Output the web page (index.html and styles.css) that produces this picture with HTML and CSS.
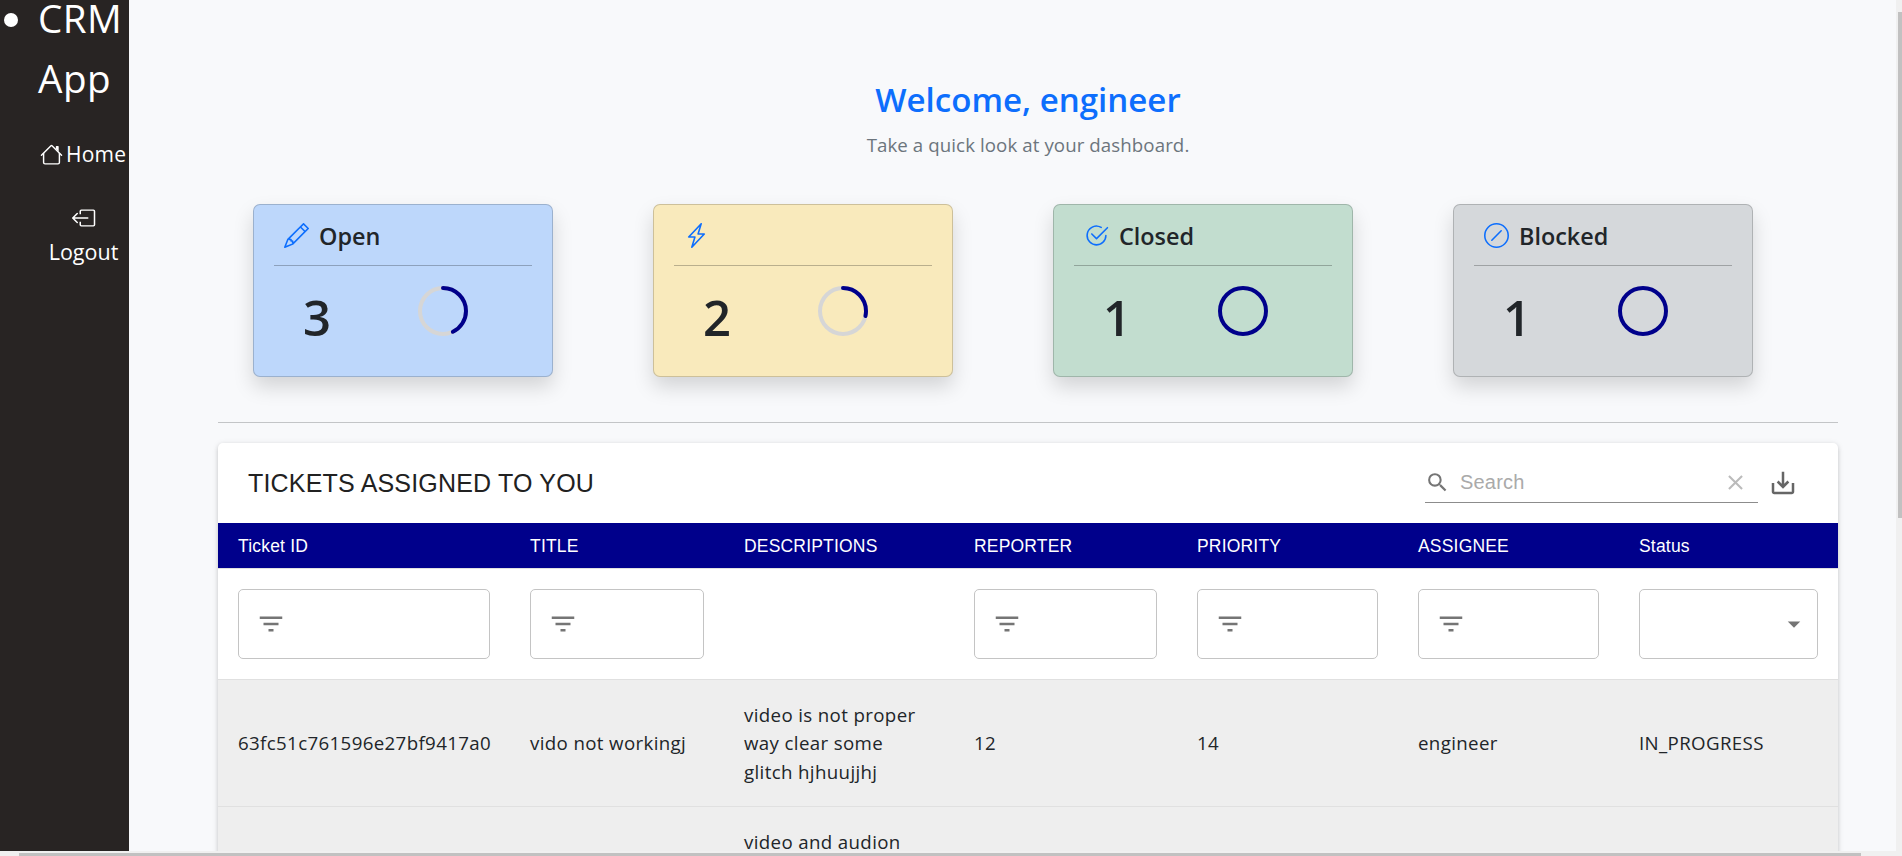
FILE: index.html
```html
<!DOCTYPE html>
<html lang="en">
<head>
<meta charset="utf-8">
<title>CRM App</title>
<link rel="stylesheet" href="styles.css">
</head>
<body>
<div class="window">
  <aside class="sidebar">
    <ul class="nav">
      <li class="brand">CRM App</li>
    </ul>
    <a class="nav-home"><svg class="icon" viewBox="0 0 16 16"><path fill-rule="evenodd" d="M2 13.5V7h1v6.5a.5.5 0 0 0 .5.5h9a.5.5 0 0 0 .5-.5V7h1v6.5a1.5 1.5 0 0 1-1.5 1.5h-9A1.5 1.5 0 0 1 2 13.5zm11-11V6l-2-2V2.500a.5.5 0 0 1 .5-.5h1a.5.5 0 0 1 .5.5z"/><path fill-rule="evenodd" d="M7.293 1.500a1 1 0 0 1 1.414 0l6.647 6.646a.5.5 0 0 1-.708.708L8 2.207 1.354 8.854a.5.5 0 1 1-.708-.708L7.293 1.500z"/></svg><span>Home</span></a>
    <a class="nav-logout"><svg class="icon logout-icon" viewBox="0 0 16 16"><path fill-rule="evenodd" d="M5 4.500V3.500A1.200 1.200 0 0 1 6.200 2.300h8.100A1.200 1.200 0 0 1 15.500 3.500v9a1.200 1.200 0 0 1-1.200 1.200H6.200A1.200 1.200 0 0 1 5 12.500v-2h1v2a.3.3 0 0 0 .3.3h7.900a.3.3 0 0 0 .3-.3v-9a.3.3 0 0 0-.3-.3H6.300a.3.3 0 0 0-.3.3v2h-1z"/><path fill-rule="evenodd" d="M.146 8.354a.5.5 0 0 1 0-.708l3-3a.5.5 0 1 1 .708.708L1.707 7.500H10.500a.5.5 0 0 1 0 1H1.707l2.147 2.146a.5.5 0 0 1-.708.708l-3-3z"/></svg><span>Logout</span></a>
  </aside>

  <main class="content">
    <h3 class="welcome">Welcome, engineer</h3>
    <p class="lead">Take a quick look at your dashboard.</p>

    <section class="cards">
      <article class="card open">
        <h5 class="card-title"><svg class="icon" viewBox="0 0 16 16"><path d="M12.146.146a.5.5 0 0 1 .708 0l3 3a.5.5 0 0 1 0 .708l-10 10a.5.5 0 0 1-.168.11l-5 2a.5.5 0 0 1-.65-.65l2-5a.5.5 0 0 1 .11-.168l10-10zM11.207 2.500 13.500 4.793 14.793 3.500 12.500 1.207 11.207 2.500zm1.586 3L10.500 3.207 4 9.707V10h.5a.5.5 0 0 1 .5.5v.5h.5a.5.5 0 0 1 .5.5v.5h.293l6.500-6.500zm-9.761 5.175-.106.106-1.528 3.821 3.821-1.528.106-.106A.5.5 0 0 1 5 12.500V12h-.5a.5.5 0 0 1-.5-.5V11h-.5a.5.5 0 0 1-.468-.325z"/></svg><span>Open</span></h5>
        <div class="card-body"><span class="count">3</span><svg class="ring" viewBox="0 0 50 50"><circle class="trail" cx="25" cy="25" r="23"/><circle class="bar" cx="25" cy="25" r="23" pathLength="100" stroke-dasharray="42.9 100"/></svg></div>
      </article>
      <article class="card progress">
        <h5 class="card-title"><svg class="icon" viewBox="0 0 16 16"><path d="M11.251.068a.5.5 0 0 1 .227.580L9.677 6.500H13a.5.5 0 0 1 .364.843l-8 8.500a.5.5 0 0 1-.842-.490L6.323 9.500H3a.5.5 0 0 1-.364-.843l8-8.500a.5.5 0 0 1 .615-.090zM4.157 8.500H7a.5.5 0 0 1 .478.647L6.110 13.590l5.732-6.090H9a.5.5 0 0 1-.478-.647L9.890 2.410 4.157 8.500z"/></svg></h5>
        <div class="card-body"><span class="count">2</span><svg class="ring" viewBox="0 0 50 50"><circle class="trail" cx="25" cy="25" r="23"/><circle class="bar" cx="25" cy="25" r="23" pathLength="100" stroke-dasharray="28.6 100"/></svg></div>
      </article>
      <article class="card closed">
        <h5 class="card-title"><svg class="icon" viewBox="0 0 16 16"><path d="M2.500 8a5.500 5.500 0 0 1 8.250-4.764.5.5 0 0 0 .5-.866A6.500 6.500 0 1 0 14.500 8a.5.5 0 0 0-1 0 5.500 5.500 0 1 1-11 0z"/><path d="M15.354 3.354a.5.5 0 0 0-.708-.708L8 9.293 5.354 6.646a.5.5 0 1 0-.708.708l3 3a.5.5 0 0 0 .708 0l7-7z"/></svg><span>Closed</span></h5>
        <div class="card-body"><span class="count">1</span><svg class="ring" viewBox="0 0 50 50"><circle class="bar" cx="25" cy="25" r="23"/></svg></div>
      </article>
      <article class="card blocked">
        <h5 class="card-title"><svg class="icon" viewBox="0 0 16 16"><path d="M8 15A7 7 0 1 1 8 1a7 7 0 0 1 0 14zm0 1A8 8 0 1 0 8 0a8 8 0 0 0 0 16z"/><path d="M11.354 4.646a.5.5 0 0 0-.708 0l-6 6a.5.5 0 0 0 .708.708l6-6a.5.5 0 0 0 0-.708z"/></svg><span>Blocked</span></h5>
        <div class="card-body"><span class="count">1</span><svg class="ring" viewBox="0 0 50 50"><circle class="bar" cx="25" cy="25" r="23"/></svg></div>
      </article>
    </section>

    <hr class="divider">

    <section class="paper">
      <header class="toolbar">
        <h6 class="table-title">TICKETS ASSIGNED TO YOU</h6>
        <div class="search">
          <svg class="mui-sm" viewBox="0 0 24 24"><path d="M15.500 14h-.79l-.28-.27A6.471 6.471 0 0 0 16 9.500 6.500 6.500 0 1 0 9.500 16c1.610 0 3.090-.59 4.230-1.570l.27.28v.79l5 4.990L20.490 19l-4.990-5zm-6 0C7.010 14 5 11.990 5 9.500S7.010 5 9.500 5 14 7.010 14 9.500 11.990 14 9.500 14z"/></svg>
          <span class="placeholder">Search</span>
          <svg class="mui-sm clear" viewBox="0 0 24 24"><path d="M19 6.410 17.590 5 12 10.590 6.410 5 5 6.410 10.590 12 5 17.590 6.410 19 12 13.410 17.590 19 19 17.590 13.410 12z"/></svg>
        </div>
        <svg class="mui export" viewBox="0 0 24 24"><path d="M19 12v7H5v-7H3v7c0 1.100.9 2 2 2h14c1.100 0 2-.9 2-2v-7h-2zm-6 .67 2.590-2.580L17 11.500l-5 5-5-5 1.410-1.410L11 12.670V3h2z"/></svg>
      </header>
      <table class="tickets">
        <colgroup><col class="c-id"><col class="c-title"><col class="c-desc"><col class="c-reporter"><col class="c-priority"><col class="c-assignee"><col class="c-status"></colgroup>
        <thead>
          <tr><th>Ticket ID</th><th>TITLE</th><th>DESCRIPTIONS</th><th>REPORTER</th><th>PRIORITY</th><th>ASSIGNEE</th><th>Status</th></tr>
        </thead>
        <tbody>
          <tr class="filters">
            <td><div class="field"><svg class="mui" viewBox="0 0 24 24"><path d="M10 18h4v-2h-4v2zM3 6v2h18V6H3zm3 7h12v-2H6v2z"/></svg></div></td>
            <td><div class="field"><svg class="mui" viewBox="0 0 24 24"><path d="M10 18h4v-2h-4v2zM3 6v2h18V6H3zm3 7h12v-2H6v2z"/></svg></div></td>
            <td></td>
            <td><div class="field"><svg class="mui" viewBox="0 0 24 24"><path d="M10 18h4v-2h-4v2zM3 6v2h18V6H3zm3 7h12v-2H6v2z"/></svg></div></td>
            <td><div class="field"><svg class="mui" viewBox="0 0 24 24"><path d="M10 18h4v-2h-4v2zM3 6v2h18V6H3zm3 7h12v-2H6v2z"/></svg></div></td>
            <td><div class="field"><svg class="mui" viewBox="0 0 24 24"><path d="M10 18h4v-2h-4v2zM3 6v2h18V6H3zm3 7h12v-2H6v2z"/></svg></div></td>
            <td><div class="field select"><svg class="mui" viewBox="0 0 24 24"><path d="M7 10l5 5 5-5z"/></svg></div></td>
          </tr>
          <tr class="row"><td>63fc51c761596e27bf9417a0</td><td>vido not workingj</td><td>video is not proper<br>way clear some<br>glitch hjhuujjhj</td><td>12</td><td>14</td><td>engineer</td><td>IN_PROGRESS</td></tr>
          <tr class="row"><td></td><td></td><td>video and audion</td><td></td><td></td><td></td><td></td></tr>
        </tbody>
      </table>
    </section>
  </main>

  <div class="scroll-y"><div class="thumb-y"></div></div>
  <div class="scroll-x"><div class="thumb-x"></div></div>
</div>
</body>
</html>
```
FILE: styles.css
```css
* { box-sizing: border-box; }
body { margin: 0; background: #f8f9fb; color: #212529; font-family: "Open Sans", sans-serif; font-size: 18.7px; }
.window { display: grid; grid-template-columns: 129px 1fr 6px; grid-template-rows: 851px 5px; height: 856px; overflow: hidden; }
.sidebar { background: #282423; color: #fff; padding-left: 38px; font-size: 21px; }
.nav { margin: -12px 0 0; padding: 0; }
.brand { font-size: 38.6px; line-height: 60px; letter-spacing: .5px; }
.icon { fill: currentColor; flex: none; }
.nav-home { display: flex; align-items: center; gap: 3px; height: 34px; margin-top: 29px; padding-left: 2px; letter-spacing: .2px; }
.nav-home .icon { width: 23px; height: 23px; }
.nav-logout { display: flex; flex-direction: column; align-items: center; width: 91px; margin-top: 28px; line-height: 34px; font-size: 21.5px; }
.logout-icon { width: 24px; height: 24px; margin: 7px 0 5px; }

.content { padding: 79px 58px 0 89px; overflow: hidden; }
.welcome { margin: 0; color: #0d6efd; font-size: 33.1px; font-weight: 600; line-height: 42px; text-align: center; }
.lead { margin: 8px 0 0; color: #6c757d; line-height: 31px; letter-spacing: .08px; text-align: center; }
.cards { display: grid; grid-template-columns: repeat(4, 300px); gap: 100px; margin: 44px 0 0 35px; }
.card { height: 173px; padding: 15px 20px 0; border: 1px solid rgba(0, 0, 0, .175); border-radius: 7px; box-shadow: 0 10px 20px rgba(0, 0, 0, .15); }
.open { background: #bdd7fb; }
.progress { background: #f9eabc; }
.closed { background: #c2ddcf; }
.blocked { background: #d5d8db; }
.card-title { display: flex; align-items: center; gap: 10px; height: 46px; margin: 0; padding: 0 0 14px 10px; border-bottom: 1px solid rgba(0, 0, 0, .25); font-size: 23.4px; font-weight: 600; line-height: 31px; }
.card-title span { padding-top: 2px; }
.card-title .icon { width: 25px; height: 25px; color: #0d6efd; }
.card-body { display: flex; align-items: flex-start; padding: 20px 0 0 29px; }
.count { width: 115px; margin-top: -1px; font-size: 49px; line-height: 64px; font-weight: 600; }
.ring { width: 50px; height: 50px; transform: rotate(-90deg); fill: none; }
.trail { stroke: #d6d6d6; stroke-width: 4; }
.bar { stroke: #00008b; stroke-width: 4; stroke-linecap: round; }
.divider { margin: 45px 0 20px; border: 0; border-top: 1px solid #c3c5c7; }

.paper { background: #fff; border-radius: 5px; box-shadow: 0 2px 4px rgba(0, 0, 0, .13), 0 1px 6px rgba(0, 0, 0, .1); }
.toolbar { display: flex; align-items: center; height: 80px; padding: 0 40px 0 30px; font-family: "Liberation Sans", sans-serif; }
.table-title { margin: 0 auto 0 0; font-size: 25px; font-weight: 400; letter-spacing: .1875px; color: #212121; }
.search { display: flex; align-items: center; width: 333px; height: 40px; border-bottom: 1px solid #8c8c8c; }
.mui { width: 30px; height: 30px; fill: #757575; flex: none; }
.mui-sm { width: 25px; height: 25px; fill: #757575; flex: none; }
.placeholder { flex: 1; margin-left: 10px; font-size: 20px; letter-spacing: .1876px; color: #aaa; }
.clear { fill: #bbb; margin-right: 10px; }
.export { margin-left: 10px; fill: #666; }

.tickets { width: 1620px; table-layout: fixed; border-collapse: collapse; }
.c-id { width: 292px; }
.c-title { width: 214px; }
.c-desc { width: 230px; }
.c-reporter { width: 223px; }
.c-priority { width: 221px; }
.c-assignee { width: 221px; }
.c-status { width: 219px; }
th { height: 45px; padding: 3px 20px 0; background: #00008b; color: #fff; font: 400 17.5px "Liberation Sans", sans-serif; letter-spacing: .1874px; text-align: left; }
td { padding: 20px; border-bottom: 1px solid #e0e0e0; line-height: 28.6px; }
.filters td { border-top: 1px solid #e0e0e0; }
.field { display: flex; align-items: center; height: 70px; padding-left: 16.5px; border: 1px solid #c4c4c4; border-radius: 5px; }
.select { justify-content: flex-end; padding: 0 8px 0 0; }
.row { background: #eee; }
.row td { padding: 21px 20px 20px; letter-spacing: .36px; }

.scroll-y { padding: 12px 0 0 2px; background: #f0f0f0; }
.thumb-y { height: 506px; background: #c1c1c1; }
.scroll-x { grid-column: 1 / -1; padding: 2px 41px 0 19px; background: #f0f0f0; }
.thumb-x { height: 3px; background: #c1c1c1; }
```
